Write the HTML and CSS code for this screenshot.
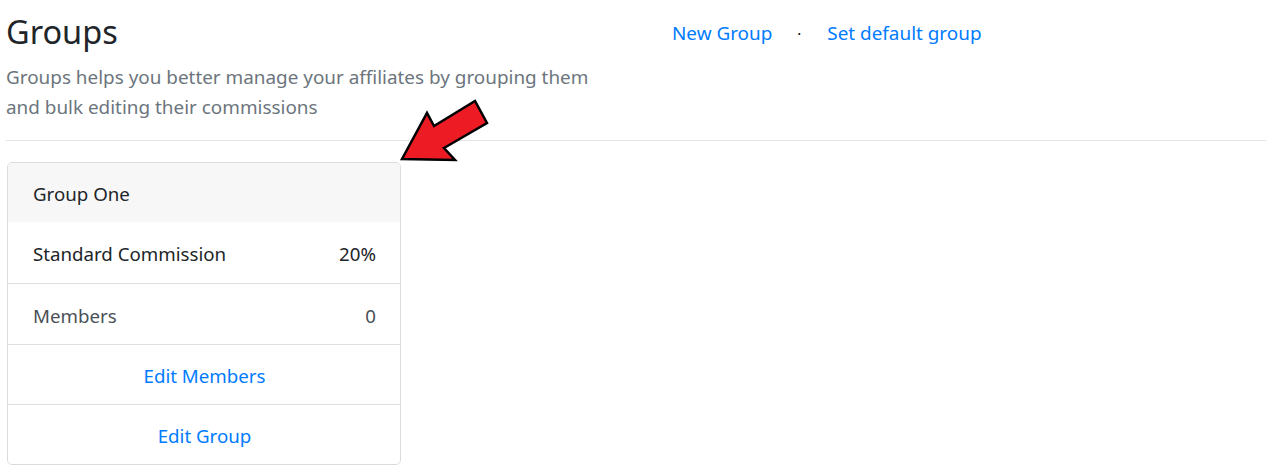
FILE: index.html
```html
<!DOCTYPE html>
<html>
<head>
<meta charset="utf-8">
<link rel="stylesheet" href="styles.css">
</head>
<body>
<div class="page">
  <div class="head">
    <div class="intro">
      <h1 class="title">Groups</h1>
      <p class="lead">Groups helps you better manage your affiliates by grouping them and bulk editing their commissions</p>
    </div>
    <div class="actions">
      <a class="link">New Group</a>
      <span class="dot">·</span>
      <a class="link">Set default group</a>
    </div>
  </div>
  <hr class="rule">
  <div class="card">
    <div class="card-header">Group One</div>
    <div class="item"><span>Standard Commission</span><span>20%</span></div>
    <div class="item muted"><span>Members</span><span>0</span></div>
    <div class="item center short"><a class="link">Edit Members</a></div>
    <div class="item center short"><a class="link">Edit Group</a></div>
  </div>
  <svg class="arrow" width="100" height="70" viewBox="395 95 100 70">
    <polygon points="402,159 427,113 434,126 475,101 487,123 444,148 455,160" fill="#ed1c24" stroke="#000" stroke-width="2.5" stroke-linejoin="miter"/>
  </svg>
</div>
</body>
</html>
```
FILE: styles.css
```css
* { box-sizing: border-box; }
body {
  margin: 0;
  font-family: "Noto Sans", "Open Sans", sans-serif;
  color: #212529;
  background: #fff;
}
.page {
  position: relative;
  padding: 0 6px;
}
.head {
  display: flex;
  align-items: flex-start;
}
.intro {
  width: 666px;
  flex: none;
}
.title {
  margin: 0;
  padding-top: 12px;
  font-size: 32.5px;
  font-weight: 400;
  line-height: 40px;
  color: #212529;
}
.lead {
  margin: 10px 0 0;
  font-size: 18.9px;
  line-height: 30px;
  color: #6c757d;
  width: 610px;
}
.actions {
  display: flex;
  align-items: center;
  padding-top: 18px;
  font-size: 18.9px;
  line-height: 30px;
}
.link {
  color: #007bff;
  text-decoration: none;
}
.dot {
  margin: 0 26px 0 25px;
  color: #000;
  font-size: 15px;
}
.rule {
  margin: 18px 0 21px;
  border: 0;
  border-top: 1px solid #e3e3e3;
}
.card {
  width: 394px;
  margin-left: 1px;
  border: 1px solid #dcdcdc;
  border-radius: 5px;
  overflow: hidden;
  font-size: 18.7px;
}
.card-header {
  background: #f7f7f7;
  height: 59px;
  padding: 2px 25px 0;
  display: flex;
  align-items: center;
}
.item {
  height: 61px;
  padding: 2px 24px 0 25px;
  display: flex;
  align-items: center;
  justify-content: space-between;
  border-top: 1px solid #dfdfdf;
}
.card-header + .item { border-top: 0; }
.item.short { height: 60px; }
.item.muted { color: #495057; }
.item.center { justify-content: center; }
.arrow {
  position: absolute;
  left: 395px;
  top: 95px;
}
```
